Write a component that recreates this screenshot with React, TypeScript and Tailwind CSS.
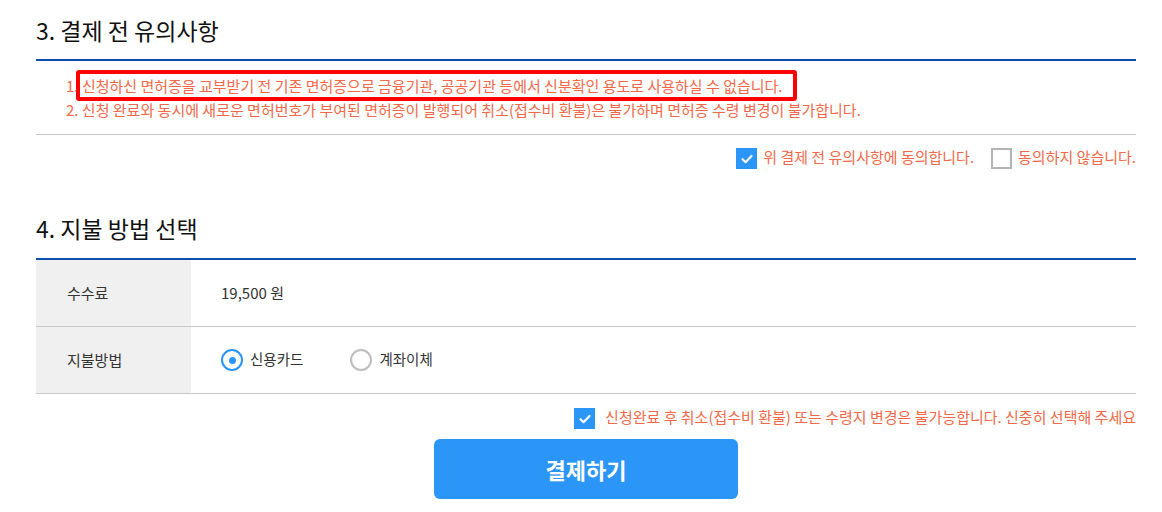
import React from 'react';

const font = { fontFamily: '"Noto Sans CJK KR", "Noto Sans", sans-serif' };

const CheckedBox: React.FC = () => (
  <span className="w-[21px] h-[21px] bg-[#2b96f5] flex items-center justify-center shrink-0">
    <svg width="14" height="14" viewBox="0 0 14 14" fill="none">
      <polyline points="2.5,7.2 5.6,10.2 11.5,4" stroke="white" strokeWidth="2.2" strokeLinecap="round" strokeLinejoin="round" />
    </svg>
  </span>
);

const EmptyBox: React.FC = () => (
  <span className="w-[21px] h-[21px] border-2 border-[#b4b4b4] bg-white shrink-0" />
);

const Radio: React.FC<{ checked?: boolean; label: string }> = ({ checked, label }) => (
  <label className="flex items-center gap-[7px]">
    <span
      className={
        checked
          ? 'w-[22px] h-[22px] rounded-full border-2 border-[#2b96f5] flex items-center justify-center'
          : 'w-[22px] h-[22px] rounded-full border-2 border-[#bdbdbd]'
      }
    >
      {checked && <span className="w-[7px] h-[7px] rounded-full bg-[#2b96f5]" />}
    </span>
    <span className="text-[14.5px] text-[#333] -mt-[3px]">{label}</span>
  </label>
);

const App: React.FC = () => {
  return (
    <div className="w-[1162px] h-[512px] bg-white overflow-hidden" style={font}>
      <div className="ml-[36px] w-[1100px]">
        <h2 className="pt-[15px] text-[23px] leading-[30px] text-[#111]">3. 결제 전 유의사항</h2>
        <div className="mt-[14px] border-t-2 border-[#0d4fb0]" />
        <ul className="pt-[13px] pb-[12px] pl-[30px] text-[15px] leading-[24px] text-[#f2694a] border-b border-[#c8c8c8]">
          <li>
            1.{' '}
            <span className="relative">
              신청하신 면허증을 교부받기 전 기존 면허증으로 금융기관, 공공기관 등에서 신분확인 용도로 사용하실 수 없습니다.
              <span className="absolute -left-[6px] -right-[14px] -top-[5px] -bottom-[5px] border-4 border-[#ff0000] rounded-[3px]" />
            </span>
          </li>
          <li>2. 신청 완료와 동시에 새로운 면허번호가 부여된 면허증이 발행되어 취소(접수비 환불)은 불가하며 면허증 수령 변경이 불가합니다.</li>
        </ul>
        <div className="pt-[13px] flex justify-end items-center text-[15px] text-[#f2694a]">
          <label className="flex items-center gap-[6px]">
            <CheckedBox />
            <span className="-mt-[2px]">위 결제 전 유의사항에 동의합니다.</span>
          </label>
          <label className="flex items-center gap-[6px] ml-[17px]">
            <EmptyBox />
            <span className="-mt-[2px]">동의하지 않습니다.</span>
          </label>
        </div>

        <h2 className="mt-[44px] text-[23px] leading-[30px] text-[#111]">4. 지불 방법 선택</h2>
        <div className="mt-[15px] border-t-2 border-[#0d4fb0]" />
        <div className="text-[15px] text-[#333]">
          <div className="flex h-[67px] border-b border-[#c8c8c8]">
            <div className="w-[155px] bg-[#f0f0f0] pl-[31px] flex items-center">수수료</div>
            <div className="pl-[30px] flex items-center">19,500 원</div>
          </div>
          <div className="flex h-[67px] border-b border-[#c8c8c8]">
            <div className="w-[155px] bg-[#f0f0f0] pl-[31px] flex items-center">지불방법</div>
            <div className="pl-[30px] flex items-center gap-[47px]">
              <Radio checked label="신용카드" />
              <Radio label="계좌이체" />
            </div>
          </div>
        </div>
        <div className="pt-[14px] flex justify-end items-center text-[15px] text-[#f2694a]">
          <label className="flex items-center gap-[10px]">
            <CheckedBox />
            <span className="-mt-[2px]">신청완료 후 취소(접수비 환불) 또는 수령지 변경은 불가능합니다. 신중히 선택해 주세요</span>
          </label>
        </div>
        <div className="mt-[10px] flex justify-center">
          <button className="w-[304px] h-[60px] rounded-[6px] bg-[#2b96f8] text-white text-[22px] font-bold">
            결제하기
          </button>
        </div>
      </div>
    </div>
  );
};

export default App;
